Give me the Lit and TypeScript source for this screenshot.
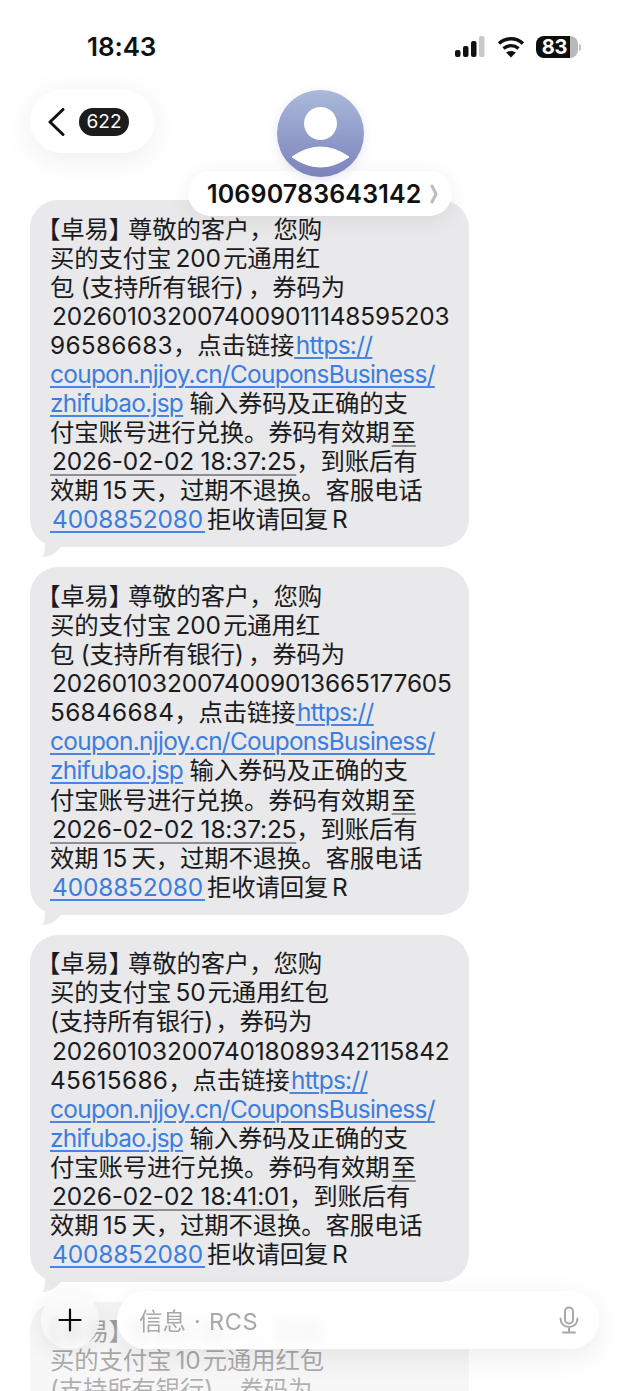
import { LitElement, html, css, svg } from "lit";
import { customElement } from "lit/decorators.js";

type Seg = { t: string; k?: "link" | "date" | "wide" };
type Line = Seg[];

const T = "\u2009";
const H = "\u200a";

function msg(l2: string, l3: string, code1: string, code2: string, when: string): Line[] {
  return [
    [{ t: "【卓易】尊敬的客户，您购" }],
    [{ t: l2 }],
    [{ t: l3 }],
    [{ t: H + code1 }],
    [{ t: code2, k: "wide" }, { t: "，点击链接" }, { t: H + "https://", k: "link" }],
    [{ t: "coupon.njjoy.cn/CouponsBusiness/", k: "link" }],
    [{ t: "zhifubao.jsp", k: "link" }, { t: T + H + "输入券码及正确的支" }],
    [{ t: "付宝账号进行兑换。券码有效期" + H }, { t: "至", k: "date" }],
    [{ t: H + when, k: "date" }, { t: "，到账后有" }],
    [{ t: "效期" + T + "15" + T + "天，过期不退换。客服电话" }],
    [{ t: H + "4008852080" + H, k: "link" }, { t: H + "拒收请回复" + T + "R" }],
  ];
}

const L3A = "包" + T + H + "(支持所有银行)" + T + "，券码为";
const L3B = "(支持所有银行)" + H + "，券码为";

const MESSAGES: Line[][] = [
  msg("买的支付宝" + T + "200" + H + "元通用红", L3A, "2026010320074009011148595203", "96586683", "2026-02-02 18:37:25"),
  msg("买的支付宝" + T + "200" + H + "元通用红", L3A, "2026010320074009013665177605", "56846684", "2026-02-02 18:37:25"),
  msg("买的支付宝" + T + "50" + H + "元通用红包", L3B, "2026010320074018089342115842", "45615686", "2026-02-02 18:41:01"),
  msg("买的支付宝" + T + "10" + H + "元通用红包", L3B, "", "", "").slice(0, 3),
];

@customElement("app-root")
export class AppRoot extends LitElement {
  static styles = css`
    :host {
      display: block;
      position: relative;
      width: 640px;
      height: 1391px;
      overflow: hidden;
      background: #fff;
      font-family: Inter, "Noto Sans CJK SC", "Noto Sans", sans-serif;
      color: #1b1b1d;
    }
    .messages {
      display: flex;
      flex-direction: column;
      gap: 20px;
      padding: 200px 0 0 30px;
    }
    .bubble {
      position: relative;
      box-sizing: border-box;
      width: 439px;
      min-height: 347.4px;
      padding: 14.5px 0 12.5px 20px;
      background: #e9e9eb;
      border-radius: 28px;
      font-size: 24.4px;
      line-height: 29.1px;
      font-weight: 400;
      letter-spacing: -0.14px;
    }
    .line {
      white-space: pre;
      height: 29.1px;
    }
    .alpha {
      letter-spacing: -0.7px;
    }
    .wide {
      letter-spacing: 0.3px;
    }
    .open {
      margin-left: -14px;
    }
    .close {
      margin-right: -5px;
    }
    .tail {
      position: absolute;
      left: 12px;
      bottom: -11px;
      width: 24px;
      height: 14px;
      display: block;
    }
    .link {
      color: #3b7de0;
      text-decoration: underline;
      text-decoration-color: #4a84e4;
      text-decoration-thickness: 1.5px;
      text-underline-offset: 3px;
    }
    .date {
      text-decoration: underline;
      text-decoration-color: #8f8f92;
      text-decoration-thickness: 1.5px;
      text-underline-offset: 4px;
    }
    .top-fade {
      position: absolute;
      inset: 0 0 auto 0;
      height: 200px;
      background: linear-gradient(#fff 0%, #fff 60%, rgba(255, 255, 255, 0.4) 100%);
    }
    .status {
      position: absolute;
      inset: 0 0 auto 0;
      height: 90px;
      box-sizing: border-box;
      padding: 33px 59px 0 87px;
      display: flex;
      justify-content: space-between;
      align-items: flex-start;
    }
    .time {
      font-size: 26px;
      line-height: 28px;
      font-weight: 600;
      color: #111;
      letter-spacing: -0.1px;
    }
    .indicators {
      display: flex;
      align-items: center;
      height: 28px;
    }
    .signal {
      margin-right: 12px;
    }
    .wifi {
      margin-right: 11px;
    }
    .battery {
      display: flex;
      height: 22px;
    }
    .battery-fill {
      width: 34px;
      height: 22px;
      padding-left: 3px;
      border-radius: 8px 0 0 8px;
      background: #0d0d0d;
      color: #fff;
      font-size: 20px;
      font-weight: 700;
      line-height: 22px;
      text-align: center;
      box-sizing: border-box;
      letter-spacing: -0.2px;
    }
    .battery-rest {
      width: 8px;
      height: 22px;
      border-radius: 0 8px 8px 0;
      background: #b9b9b9;
    }
    .battery-cap {
      width: 2px;
      height: 7px;
      margin: 7.5px 0 0 1px;
      border-radius: 0 2px 2px 0;
      background: #c4c4c4;
    }
    .back {
      position: absolute;
      left: 30px;
      top: 90px;
      width: 125px;
      height: 63px;
      box-sizing: border-box;
      padding-left: 18px;
      gap: 13px;
      border-radius: 32px;
      background: #fff;
      box-shadow: 0 6px 34px rgba(0, 0, 0, 0.07);
      display: flex;
      align-items: center;
    }
    .count {
      width: 50px;
      height: 28px;
      border-radius: 14px;
      background: #1c1c1e;
      color: #fff;
      font-size: 19px;
      line-height: 28px;
      text-align: center;
    }
    .avatar {
      position: absolute;
      left: 277px;
      top: 90px;
      width: 87px;
      height: 87px;
      display: block;
      filter: drop-shadow(0 3px 6px rgba(110, 120, 170, 0.18));
    }
    .name {
      position: absolute;
      left: 188px;
      top: 171px;
      width: 264px;
      height: 45px;
      box-sizing: border-box;
      padding: 1px 14px 0 19px;
      border-radius: 23px;
      background: #fff;
      box-shadow: 0 4px 24px rgba(0, 0, 0, 0.07);
      display: flex;
      align-items: center;
      justify-content: space-between;
      font-size: 25px;
      font-weight: 600;
      letter-spacing: 0.15px;
      color: #111;
    }
    .bottom-fade {
      position: absolute;
      inset: auto 0 0 0;
      height: 108px;
      background: linear-gradient(rgba(255, 255, 255, 0) 0%, rgba(255, 255, 255, 0.55) 18%, rgba(255, 255, 255, 0.66) 100%);
    }
    .composer {
      position: absolute;
      left: 41px;
      top: 1291px;
      width: 558px;
      height: 58px;
      display: flex;
      gap: 18px;
    }
    .plus {
      flex: none;
      width: 58px;
      height: 58px;
      border-radius: 50%;
      background: rgba(250, 250, 250, 0.72);
      backdrop-filter: blur(4px);
      box-shadow: 0 4px 22px rgba(0, 0, 0, 0.07);
      display: flex;
      align-items: center;
      justify-content: center;
    }
    .input {
      flex: 1;
      border-radius: 29px;
      background: rgba(255, 255, 255, 0.86);
      backdrop-filter: blur(5px);
      box-shadow: 0 8px 30px rgba(0, 0, 0, 0.08);
      box-sizing: border-box;
      padding: 0 19px 0 22px;
      display: flex;
      align-items: center;
      justify-content: space-between;
      color: #a8a8aa;
      font-size: 23.5px;
      word-spacing: 1.5px;
      white-space: pre;
    }
    .rcs {
      letter-spacing: 0.6px;
    }
    .input svg {
      display: block;
    }
  `;

  private renderText(text: string) {
    const parts = text.split(/([\u2009\u200a\x20-\x7e]+)/).filter((p) => p !== "");
    return parts.map((p) => {
      if (/[a-zA-Z]/.test(p) && /^[\u2009\u200a\x20-\x7e]+$/.test(p)) {
        return html`<span class="alpha">${p}</span>`;
      }
      if (p.startsWith("【")) {
        const i = p.indexOf("】");
        return html`<span class="open">【</span>${p.slice(1, i)}<span class="close">】</span>${p.slice(i + 1)}`;
      }
      return p;
    });
  }

  private renderBubble(lines: Line[]) {
    return html`<div class="bubble">
      ${lines.map(
        (line) => html`<div class="line">${line.map(
          (s) => html`<span class=${s.k ?? ""}>${this.renderText(s.t)}</span>`
        )}</div>`
      )}
      <svg class="tail" viewBox="0 0 24 14" aria-hidden="true">
        <path d="M3 0 C3 5 3 9 0 13 C8 13 14 9 19 3 L19 0 Z" fill="#e9e9eb"></path>
      </svg>
    </div>`;
  }

  render() {
    return html`
      <div class="messages">${MESSAGES.map((m) => this.renderBubble(m))}</div>
      <div class="bottom-fade"></div>
      <div class="composer">
        <div class="plus">
          <svg width="24" height="24" viewBox="0 0 24 24">
            <path d="M12 1.5V22.5M1.5 12H22.5" stroke="#0c0c0c" stroke-width="2.2" stroke-linecap="round"></path>
          </svg>
        </div>
        <div class="input">
          <span>信息 · <span class="rcs">RCS</span></span>
          <svg width="22" height="28" viewBox="0 0 22 28" fill="none" stroke="#a8a8aa" stroke-width="2" stroke-linecap="round">
            <rect x="7" y="1.5" width="8" height="16" rx="4"></rect>
            <path d="M2.5 12.5c0 5 3.6 8.5 8.5 8.5s8.5-3.5 8.5-8.5M11 21v5M5 26.5h12"></path>
          </svg>
        </div>
      </div>
      <div class="top-fade"></div>
      <div class="status">
        <div class="time">18:43</div>
        <div class="indicators">
          <svg class="signal" width="30" height="22" viewBox="0 0 30 22">
            <rect x="0" y="14" width="5.5" height="7" rx="2" fill="#111"></rect>
            <rect x="8" y="10" width="5.5" height="11" rx="2" fill="#111"></rect>
            <rect x="16" y="5" width="5.5" height="16" rx="2" fill="#111"></rect>
            <rect x="24" y="0" width="5.5" height="21" rx="2" fill="#c9c9c9"></rect>
          </svg>
          <svg class="wifi" width="28" height="22" viewBox="0 0 27 22" fill="none" stroke="#111" stroke-width="3.4">
            <path d="M1.5 7.5C8.5 1.2 18.5 1.2 25.5 7.5"></path>
            <path d="M6 12.5C10.5 8.7 16.5 8.7 21 12.5"></path>
            <path d="M13.5 21.5L8.6 16.6C11.5 14.4 15.5 14.4 18.4 16.6Z" fill="#111" stroke="none"></path>
          </svg>
          <div class="battery">
            <div class="battery-fill">83</div>
            <div class="battery-rest"></div>
            <div class="battery-cap"></div>
          </div>
        </div>
      </div>
      <div class="back">
        <svg width="18" height="28" viewBox="0 0 18 28" fill="none" stroke="#111" stroke-width="3" stroke-linecap="round" stroke-linejoin="round">
          <path d="M15 1.5L2 14L15 26.5"></path>
        </svg>
        <div class="count">622</div>
      </div>
      <div class="name">
        <span>10690783643142</span>
        <svg width="8" height="20" viewBox="0 0 8 20" fill="none" stroke="#bdbdbd" stroke-width="3" stroke-linecap="round" stroke-linejoin="round">
          <path d="M2 2L6 10L2 18"></path>
        </svg>
      </div>
      ${this.renderAvatar()}
    `;
  }

  private renderAvatar() {
    return html`<svg class="avatar" viewBox="0 0 87 87">
      <defs>
        <linearGradient id="av" x1="0" y1="0" x2="0" y2="1">
          <stop offset="0" stop-color="#abb9da"></stop>
          <stop offset="1" stop-color="#7b83bb"></stop>
        </linearGradient>
      </defs>
      ${svg`
        <circle cx="43.5" cy="43.5" r="43.5" fill="url(#av)"></circle>
        <circle cx="43.5" cy="33.5" r="16.5" fill="#fff"></circle>
        <path d="M15 67 Q43.5 47 72 67 Q43.5 87 15 67 Z" fill="#fff" stroke="#fff" stroke-width="1" stroke-linejoin="round"></path>
      `}
    </svg>`;
  }
}
